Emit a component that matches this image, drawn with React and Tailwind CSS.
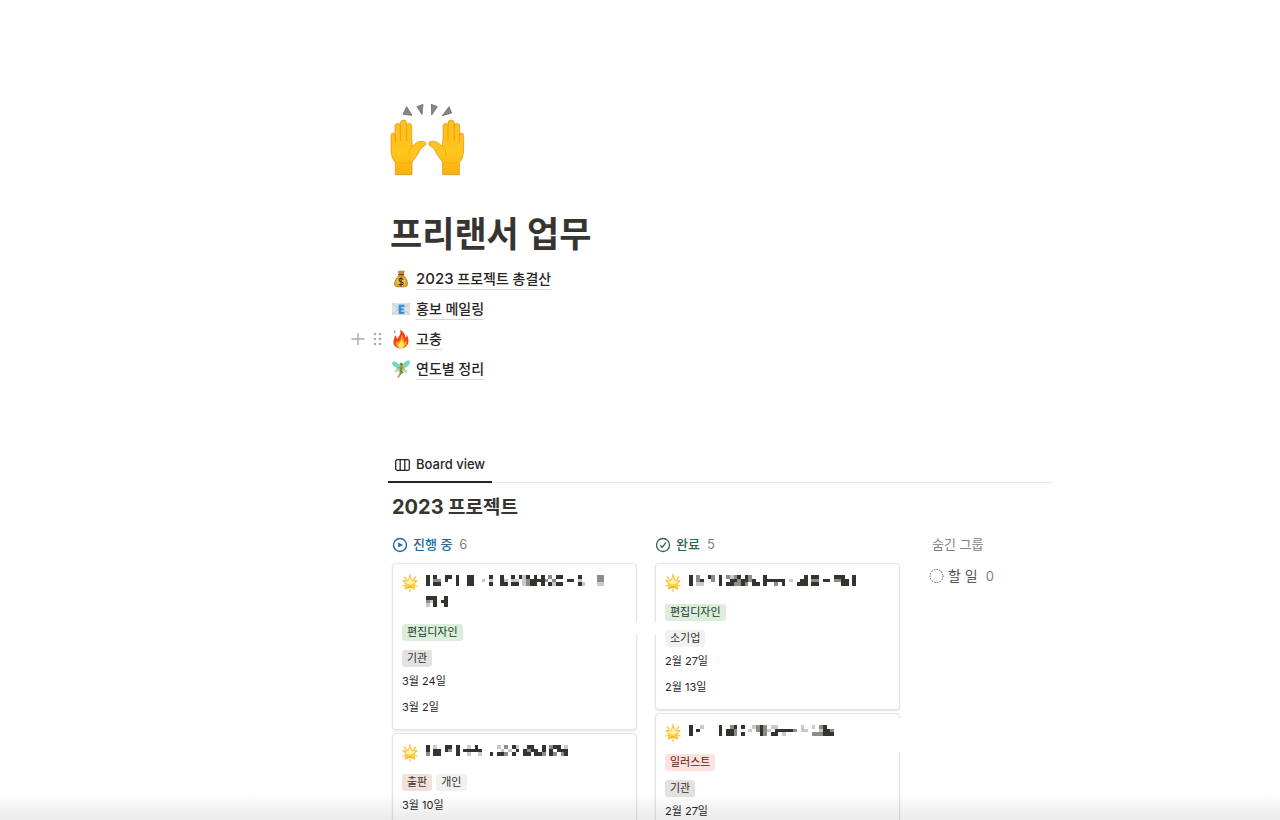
import clsx from 'clsx';

const SHADES = { 1: '#c9c9c8', 2: '#8d8c89', 3: '#34332e' };

function Mosaic({ rows, className }) {
  return (
    <svg
      className={className}
      viewBox={`0 0 ${rows[0].length} ${rows.length}`}
      preserveAspectRatio="none"
      shapeRendering="crispEdges"
      aria-hidden="true"
    >
      {rows.flatMap((row, y) =>
        [...row].map((c, x) =>
          SHADES[c] ? <rect key={`${x}-${y}`} x={x} y={y} width="1" height="1" fill={SHADES[c]} /> : null
        )
      )}
    </svg>
  );
}

function Hand() {
  return (
    <>
      <path
        d="M46 254 V218 C36 208 33 192 33 172 V137 Q33 129 39 129 Q45 129 45 137 V108 Q46 100 53 100 Q60 100 61 108 V98 Q63 90 71 90 Q79 90 80 98 V107 Q82 100 88 100 Q95 101 95 109 V146 L97 168 C103 165 108 157 117 155 C128 152 138 155 138 161 C138 167 130 169 125 173 C118 180 116 190 109 199 C104 207 96 213 96 221 V254 Z"
        fill="url(#skin)"
        stroke="#d98a10"
        strokeWidth="2"
      />
      <path d="M46 137 V158 M61 108 V153 M80 107 V153" fill="none" stroke="#e8980c" strokeWidth="2.5" />
      <path d="M49 216 Q70 225 94 216" fill="none" stroke="#f1a000" strokeWidth="2" />
      <path d="M96 168 C88 176 85 186 87 198" fill="none" stroke="#f3aa08" strokeWidth="2.5" />
    </>
  );
}

function RaisedHands() {
  return (
    <svg width="75" height="73" viewBox="30 39 225 219" role="img" aria-label="raised hands">
      <defs>
        <linearGradient id="skin" x1="0" y1="0" x2="0" y2="1">
          <stop offset="0" stopColor="#ffbe1c" />
          <stop offset="0.6" stopColor="#ffc61c" />
          <stop offset="1" stopColor="#fbb00a" />
        </linearGradient>
      </defs>
      <g fill="#85878a" stroke="#57595c" strokeWidth="2" strokeLinejoin="round">
        <path d="M80 50 L69 73 L96 76 Z" />
        <path d="M111 50 L129 43 L126 74 Z" />
        <path d="M154 43 L172 50 L155 75 Z" />
        <path d="M207 50 L215 69 L187 77 Z" />
      </g>
      <Hand />
      <g transform="translate(284 0) scale(-1 1)">
        <Hand />
      </g>
    </svg>
  );
}

function MoneyBag() {
  return (
    <svg width="18" height="18" viewBox="0 0 54 54" aria-hidden="true">
      <path d="M19 3 Q24 6 27 2 Q31 6 37 3 L33 14 H22 Z" fill="#c98a1c" stroke="#8a5a10" strokeWidth="1.5" />
      <path d="M22 15 H33 C41 22 48 33 47 43 Q46 51 36 51 H18 Q8 51 7 43 C7 33 14 22 22 15 Z" fill="#dba42b" stroke="#96660f" strokeWidth="1.5" />
      <path d="M20 14 H35" stroke="#7b4a12" strokeWidth="4" strokeLinecap="round" />
      <ellipse cx="27" cy="35" rx="13" ry="13" fill="#f3c64c" />
      <path d="M34 29 Q32 25 27 25 Q21 25 21 30 Q21 34 27 35 Q34 36 34 40 Q33 45 27 45 Q22 45 20 41 M27 21 V49" fill="none" stroke="#3b2a0c" strokeWidth="3.2" />
    </svg>
  );
}

function MailIcon() {
  return (
    <svg width="18" height="18" viewBox="0 0 54 54" aria-hidden="true">
      <rect x="0" y="9" width="54" height="36" rx="2" fill="#dfe2e5" />
      <path d="M1 10 L27 31 L53 10 M1 44 L21 26 M53 44 L33 26" fill="none" stroke="#aeb3b8" strokeWidth="2" />
      <path d="M20 14 H37 V21 H27 V25 H35 V31 H27 V35 H37 V42 H20 Z" fill="#2f86d3" stroke="#85c0ec" strokeWidth="1.5" />
    </svg>
  );
}

function FireIcon() {
  return (
    <svg width="18" height="20" viewBox="0 0 54 60" aria-hidden="true">
      <path d="M24 2 C36 8 40 17 41 27 Q44 24 44 17 C53 29 53 56 28 58 C6 58 1 43 6 29 Q8 24 9 19 Q14 23 15 29 C23 21 28 12 24 2 Z" fill="#f2421b" />
      <path d="M27 17 C36 26 36 35 38 40 Q41 38 42 33 C48 47 41 57 28 57 C14 57 8 48 13 36 Q17 40 19 39 C26 33 29 25 27 17 Z" fill="#ff9b1a" />
      <path d="M28 33 C35 41 38 46 36 51 Q33 57 27 57 Q18 56 18 48 C19 43 26 40 28 33 Z" fill="#ffe65c" />
      <path d="M8 13 Q13 8 9 4 Q4 9 8 13 Z" fill="#f2421b" />
    </svg>
  );
}

function FairyIcon() {
  return (
    <svg width="18" height="18" viewBox="0 0 54 54" aria-hidden="true">
      <path d="M26 21 C18 8 6 2 1 7 C0 16 12 24 24 25 Z M29 21 C34 8 47 -1 53 4 C55 14 43 24 30 25 Z" fill="#6fdcc8" stroke="#47bda9" strokeWidth="1" />
      <path d="M24 25 C14 25 6 31 9 37 C15 38 22 32 25 28 Z M30 25 C40 26 48 32 46 38 C39 40 33 33 29 29 Z" fill="#93e8d8" />
      <circle cx="28" cy="13" r="5" fill="#8a7a22" />
      <path d="M24 19 L32 19 L31 32 L35 38 L28 42 L21 52 L17 51 L23 39 L22 31 Z" fill="#75952a" />
      <path d="M24 20 L15 27 M32 20 L37 28 M24 41 L18 53" fill="none" stroke="#e09a32" strokeWidth="3.5" strokeLinecap="round" />
    </svg>
  );
}

function GlowingStar() {
  return (
    <svg className="shrink-0" width="16" height="18" viewBox="0 0 48 54" aria-hidden="true">
      <path d="M24 1 V9 M7 9 L12 15 M41 9 L36 15 M3 36 L10 33 M45 36 L38 33 M24 52 V46" stroke="#fbc53c" strokeWidth="4" strokeLinecap="round" />
      <path
        d="M24 7 L30 18 L46 20 L36 31 L39 46 L24 40 L9 46 L12 31 L2 20 L18 18 Z"
        fill="#ffd23a"
        stroke="#fbb62a"
        strokeWidth="2"
        strokeLinejoin="round"
      />
      <path d="M24 11 L29 21 L40 23 L31 30 L24 32 L17 30 L8 23 L19 21 Z" fill="#fff3b0" />
      <path d="M11 44 L24 36 L37 44 L24 40 Z" fill="#f59a1b" />
    </svg>
  );
}

function DragHandle() {
  return (
    <div className="flex items-center gap-2 text-[#adaba8]">
      <button type="button" aria-label="추가">
        <svg width="15" height="14" viewBox="0 0 15 14">
          <path d="M8 1 V13 M1.5 7 H14.5" stroke="currentColor" strokeWidth="1.4" />
        </svg>
      </button>
      <button type="button" aria-label="이동">
        <svg width="10" height="14" viewBox="0 0 10 14" fill="currentColor">
          {[2, 7, 12].map((y) => (
            <g key={y}>
              <circle cx="2" cy={y} r="1.3" />
              <circle cx="7" cy={y} r="1.3" />
            </g>
          ))}
        </svg>
      </button>
    </div>
  );
}

const pages = [
  { icon: <MoneyBag />, year: '2023', title: ' 프로젝트 총결산' },
  { icon: <MailIcon />, title: '홍보 메일링' },
  { icon: <FireIcon />, title: '고충', hovered: true },
  { icon: <FairyIcon />, title: '연도별 정리' },
];

const tagColors = {
  green: 'bg-[#dbeddb] text-[#1c3829]',
  gray: 'bg-[#e3e2e0] text-[#32302c]',
  light: 'bg-[#f1f1f0] text-[#32302c]',
  brown: 'bg-[#eee0da] text-[#442a1e]',
  red: 'bg-[#ffe2dd] text-[#5d1715]',
};

const inProgress = [
  {
    lines: [
      {
        size: 'w-[178px]',
        rows: [
          '3.3..33.3..33....3..3..3.313.3.3.2.33....3....22',
          '3.22.3..3..33..1.1..31.11.1233332.2...33.1....22',
          '3.33....3..33....3..33.33.1233.3.3133....31...11',
        ],
      },
      { size: 'w-[22px]', rows: ['333..3', '213.33', '1.3..3'] },
    ],
    tags: [[['편집디자인', 'green']], [['기관', 'gray']]],
    dates: ['3월 24일', '3월 2일'],
    gap: 'right',
  },
  {
    lines: [
      {
        size: 'w-[142px]',
        rows: [
          '3.1..33.3..1.3.....1.2.31..33..3.233.1',
          '3.33.32.3.33333.....1.1.3.3233.3.3.333',
          '2.33....3..1..1..3.332.3..33.332.32.23',
        ],
      },
    ],
    tags: [[['출판', 'brown'], ['개인', 'light']]],
    dates: ['3월 10일'],
  },
];

const done = [
  {
    lines: [
      {
        size: 'w-[167px]',
        rows: [
          '3.2..32.3.2123.32...3..........3.33....333..3',
          '3.23..2.3..3323323..333333.1..33.22.33.2233.3',
          '3.11....3.332232.33.3..2.3...333.33......33.3',
        ],
      },
    ],
    tags: [[['편집디자인', 'green']], [['소기업', 'light']]],
    dates: ['2월 27일', '2월 13일'],
    gap: 'left',
  },
  {
    lines: [
      {
        size: 'w-[145px]',
        rows: [
          '3..1....3..23.3..1232.11......1..1.23..',
          '3.3.....3.332...1.2321.333332.11...1332',
          '3.......3.332.3....32.33.1.......222333',
        ],
      },
    ],
    tags: [[['일러스트', 'red']], [['기관', 'gray']]],
    dates: ['2월 27일'],
    gap: 'corner',
  },
];

const gapStyles = {
  right: '-right-1 top-[58px] h-[13px] w-2',
  left: '-left-1 top-[58px] h-[13px] w-2',
  corner: '-right-1 top-1 h-[34px] w-2',
};

function Card({ lines, tags, dates, gap }) {
  return (
    <article className="relative rounded-[4px] border border-[#e4e4e3] bg-white px-[9px] pt-1.5 pb-[9px] shadow-[0_1px_2px_rgba(15,15,15,0.12)]">
      {gap && <span className={clsx('absolute bg-white', gapStyles[gap])} />}
      <div className="flex gap-2">
        <div className="pt-1">
          <GlowingStar />
        </div>
        <div>
          {lines.map((line) => (
            <div key={line.size} className="flex h-[21px] items-center">
              <Mosaic rows={line.rows} className={clsx('h-[11px]', line.size)} />
            </div>
          ))}
        </div>
      </div>
      <div className="mt-3 flex flex-col gap-[9px]">
        {tags.map((row, i) => (
          <div key={i} className="flex gap-1">
            {row.map(([label, color]) => (
              <span key={label} className={clsx('rounded-[3px] px-[5px] text-[11px] leading-[17px]', tagColors[color])}>
                {label}
              </span>
            ))}
          </div>
        ))}
      </div>
      <div className="mt-px text-[11px] leading-[26px] text-[#26251f]">
        {dates.map((date) => (
          <p key={date}>{date}</p>
        ))}
      </div>
    </article>
  );
}

function Column({ icon, name, count, color, cards }) {
  return (
    <section className="w-[245px] shrink-0">
      <h3 className={clsx('flex h-5 items-center gap-[5px] text-[13px] font-medium', color)}>
        {icon}
        {name}
        <span className="ml-0.5 font-normal text-[#82817d]">{count}</span>
      </h3>
      <div className="mt-2 flex flex-col gap-[3px]">
        {cards.map((card, i) => (
          <Card key={i} {...card} />
        ))}
      </div>
    </section>
  );
}

export default function App() {
  return (
    <div className="relative h-screen overflow-hidden bg-white font-['Inter','Noto_Sans_CJK_KR',sans-serif] text-[#37352f]">
      <main className="pt-[103px] pr-[227px] pl-[390px]">
        <RaisedHands />
        <h1 className="mt-9 text-[35px] leading-[44px] font-bold">프리랜서 업무</h1>

        <ul className="mt-2 -ml-10">
          {pages.map((page) => (
            <li key={page.title} className="flex h-[30px] items-center">
              <div className="w-[42px]">{page.hovered && <DragHandle />}</div>
              <a href="#" className="flex items-center gap-1.5 text-sm font-medium text-[#26251f]">
                {page.icon}
                <span className="border-b border-[#d9d9d7] leading-5">
                  {page.year && <span className="text-[15px]">{page.year}</span>}
                  {page.title}
                </span>
              </a>
            </li>
          ))}
        </ul>

        <nav className="mt-[63px] -ml-0.5 flex border-b border-[#e9e9e7]">
          <button
            type="button"
            className="-mb-px flex h-9 items-center gap-1.5 border-b-2 border-[#26251f] pt-0.5 pr-[7px] pl-[7px] text-[13px] font-medium text-[#26251f]"
          >
            <svg width="15" height="12" viewBox="0 0 15 12" fill="none" stroke="currentColor" strokeWidth="1.3">
              <rect x="0.7" y="0.7" width="13.6" height="10.6" rx="1.6" />
              <path d="M5.2 1 V11 M9.8 1 V11" />
            </svg>
            Board view
          </button>
        </nav>

        <h2 className="mt-2.5 ml-0.5 text-[19px] leading-7 font-bold">
          <span className="text-xl">2023</span> 프로젝트
        </h2>

        <div className="mt-[13px] ml-0.5 flex gap-[18px]">
          <Column
            name="진행 중"
            count={6}
            color="text-[#22679b]"
            cards={inProgress}
            icon={
              <svg width="16" height="16" viewBox="0 0 16 16" fill="none" stroke="currentColor" strokeWidth="1.4">
                <circle cx="8" cy="8" r="6.5" />
                <path d="M6.2 5.4 L11 8 L6.2 10.6 Z" fill="currentColor" stroke="none" />
              </svg>
            }
          />
          <Column
            name="완료"
            count={5}
            color="text-[#2c6849]"
            cards={done}
            icon={
              <svg width="16" height="16" viewBox="0 0 16 16" fill="none" stroke="currentColor" strokeWidth="1.3">
                <circle cx="8" cy="8" r="6.5" />
                <path d="M5.2 8.3 L7.2 10.4 L10.9 5.6" />
              </svg>
            }
          />
          <section className="shrink-0 pl-[11px]">
            <h3 className="pl-[3px] text-[13px] leading-[18px] text-[#82817d]">숨긴 그룹</h3>
            <button type="button" className="mt-[13px] flex h-5 items-center gap-1 text-sm text-[#55534e]">
              <svg width="15" height="16" viewBox="0 0 15 16" fill="none" stroke="currentColor" strokeWidth="1">
                <circle cx="7.5" cy="8" r="6.5" strokeDasharray="1.5 1.2" />
              </svg>
              할 일
              <span className="ml-1 text-[13px] text-[#82817d]">0</span>
            </button>
          </section>
        </div>
      </main>
      <div className="pointer-events-none absolute inset-x-0 bottom-0 h-7 bg-linear-to-b from-transparent to-black/8" />
    </div>
  );
}
